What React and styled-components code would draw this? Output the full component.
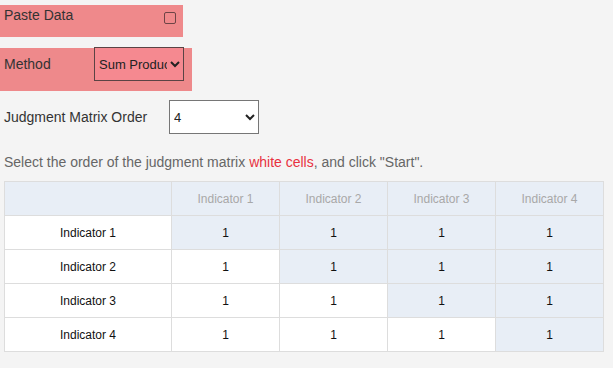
import React from "react";
import styled, { createGlobalStyle } from "styled-components";

const Global = createGlobalStyle`
  html, body { margin: 0; padding: 0; background: #f4f4f4; }
  body { font-family: "Liberation Sans", Arial, sans-serif; color: #333; }
`;

const Page = styled.div`
  display: flex;
  flex-direction: column;
  padding-top: 5px;
`;

const PasteBar = styled.div`
  width: 183px;
  height: 32px;
  box-sizing: border-box;
  background: #ef898b;
  display: flex;
  align-items: flex-start;
  padding: 0 4px 0 4px;
`;

const BarLabel = styled.span`
  font-size: 14px;
  line-height: 20px;
  color: #333;
`;

const Check = styled.input`
  margin: 7px 3px 0 auto;
  width: 12px;
  height: 12px;
  appearance: none;
  border: 1px solid #6e4446;
  border-radius: 2px;
  background: transparent;
  box-sizing: border-box;
`;

const MethodBar = styled.div`
  margin-top: 11px;
  width: 192px;
  height: 43px;
  box-sizing: border-box;
  background: #ee898b;
  display: flex;
  align-items: flex-start;
  padding-left: 4px;
`;

const MethodLabel = styled.span`
  font-size: 14px;
  line-height: 20px;
  margin-top: 6px;
  width: 90px;
  color: #333;
`;

const Select = styled.select`
  width: 90px;
  height: 34px;
  box-sizing: border-box;
  font-family: "Liberation Sans", Arial, sans-serif;
  font-size: 13px;
  color: #222;
  border: 1px solid ${(p) => (p.$pink ? "#5a4344" : "#767676")};
  background: ${(p) => (p.$pink ? "#f58990" : "#fff")};
  border-radius: 0;
  padding: 0;
  margin-top: ${(p) => (p.$pink ? "-1px" : "0")};
  outline: none;
`;

const OrderRow = styled.div`
  margin-top: 9px;
  display: flex;
  align-items: center;
  padding-left: 4px;
  height: 34px;
`;

const OrderLabel = styled.span`
  font-size: 14px;
  color: #333;
  width: 165px;
`;

const Hint = styled.p`
  margin: 20px 0 0 4px;
  font-size: 14px;
  line-height: 16px;
  color: #666;
`;

const Red = styled.span`
  color: #e8313f;
`;

const Table = styled.table`
  margin: 11px 0 0 4px;
  width: 600px;
  border-collapse: collapse;
  background: #fff;
  table-layout: fixed;
  font-size: 12px;
`;

const Th = styled.th`
  height: 33px;
  border: 1px solid #dddddd;
  background: #e8eef6;
  color: #a8a8a8;
  font-weight: normal;
  text-align: center;
  padding: 0;
  width: ${(p) => (p.$first ? "166px" : "auto")};
`;

const Td = styled.td`
  height: 33px;
  border: 1px solid #dddddd;
  background: ${(p) => (p.$shade ? "#e8eef6" : "#ffffff")};
  color: #111;
  text-align: center;
  padding: 0;
`;

const names = ["Indicator 1", "Indicator 2", "Indicator 3", "Indicator 4"];

export default function App() {
  return (
    <>
      <Global />
      <Page>
        <PasteBar>
          <BarLabel>Paste Data</BarLabel>
          <Check type="checkbox" />
        </PasteBar>
        <MethodBar>
          <MethodLabel>Method</MethodLabel>
          <Select $pink defaultValue="sum">
            <option value="sum">Sum Product</option>
            <option value="root">Root</option>
          </Select>
        </MethodBar>
        <OrderRow>
          <OrderLabel>Judgment Matrix Order</OrderLabel>
          <Select defaultValue="4">
            <option>3</option>
            <option>4</option>
            <option>5</option>
          </Select>
        </OrderRow>
        <Hint>
          Select the order of the judgment matrix <Red>white cells</Red>, and click "Start".
        </Hint>
        <Table>
          <thead>
            <tr>
              <Th $first />
              {names.map((n) => (
                <Th key={n}>{n}</Th>
              ))}
            </tr>
          </thead>
          <tbody>
            {names.map((n, i) => (
              <tr key={n}>
                <Td>{n}</Td>
                {names.map((m, j) => (
                  <Td key={m} $shade={j >= i}>1</Td>
                ))}
              </tr>
            ))}
          </tbody>
        </Table>
      </Page>
    </>
  );
}
